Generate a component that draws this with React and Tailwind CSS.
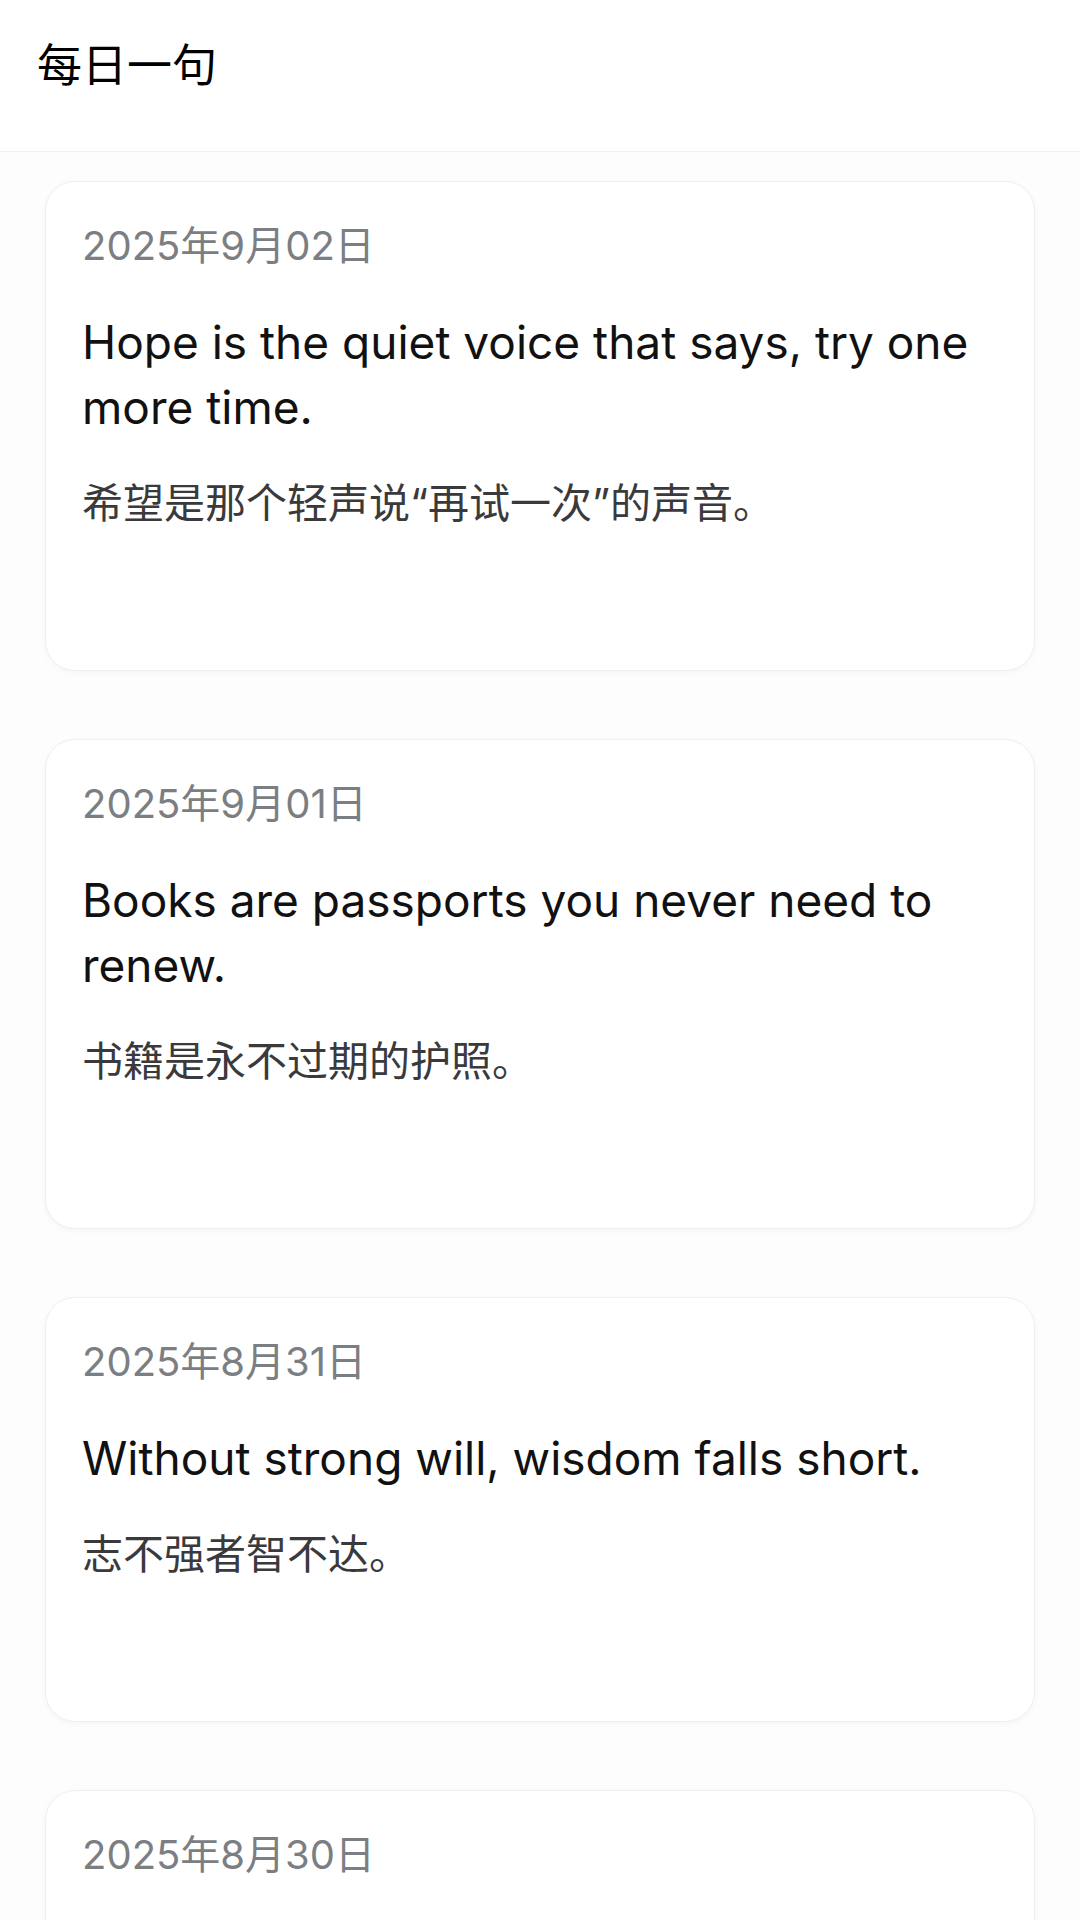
const quotes = [
  {
    date: '2025年9月02日',
    en: 'Hope is the quiet voice that says, try one more time.',
    zh: '希望是那个轻声说“再试一次”的声音。',
  },
  {
    date: '2025年9月01日',
    en: 'Books are passports you never need to renew.',
    zh: '书籍是永不过期的护照。',
  },
  {
    date: '2025年8月31日',
    en: 'Without strong will, wisdom falls short.',
    zh: '志不强者智不达。',
  },
  {
    date: '2025年8月30日',
    en: 'The best time to plant a tree was twenty years ago.',
    zh: '种一棵树最好的时间是十年前。',
  },
]

function QuoteCard({ quote }) {
  return (
    <article className="rounded-[30px] border border-[#efefef] bg-white px-[36px] pt-[35px] pb-[139px] shadow-[0_2px_6px_rgba(0,0,0,0.035)]">
      <div className="text-[40px] leading-[58px] text-[#7b7e83]">{quote.date}</div>
      <p className="mt-[35px] text-[46px] leading-[65px] text-[#111111]">{quote.en}</p>
      <p className="mt-[35px] text-[41px] leading-[56px] text-[#3a3a3c]">{quote.zh}</p>
    </article>
  )
}

export default function App() {
  return (
    <div
      className="min-h-[1920px] w-[1080px] overflow-hidden bg-[#fdfdfd]"
      style={{ fontFamily: 'Inter, "Noto Sans CJK SC", sans-serif' }}
    >
      <header className="h-[152px] border-b border-[#f0f0f0] bg-white pl-[37px] pt-[36px]">
        <h1 className="text-[45px] leading-[60px] font-normal text-black">每日一句</h1>
      </header>

      <main className="flex flex-col gap-[68px] px-[45px] pt-[29px]">
        {quotes.map((quote) => (
          <QuoteCard key={quote.date} quote={quote} />
        ))}
      </main>
    </div>
  )
}
